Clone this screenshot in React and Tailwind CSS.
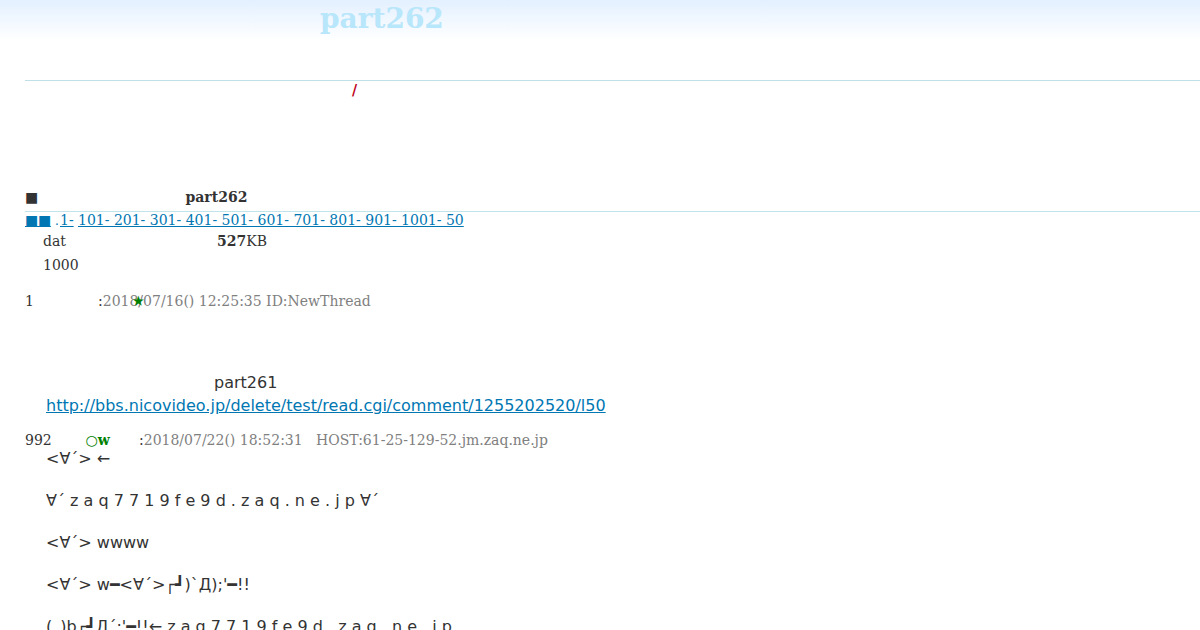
import clsx from 'clsx'

const PAGES = ['101-', '201-', '301-', '401-', '501-', '601-', '701-', '801-', '901-', '1001-', '50']

const LINES = [
  "<∀´> ←",
  "∀´ z a q 7 7 1 9 f e 9 d . z a q . n e . j p ∀´",
  "<∀´> wwww",
  "<∀´> w━<∀´>┌┛)`Д);'━!!",
  "(\u2002)b┌┛Д´;'━!!← z a q 7 7 1 9 f e 9 d . z a q . n e . j p",
]

function Link({ className, children }) {
  return (
    <a href="#" className={clsx('text-[#0077b3] underline', className)}>
      {children}
    </a>
  )
}

export default function App() {
  return (
    <div className="h-[630px] overflow-hidden whitespace-pre bg-white bg-linear-to-b from-[#e3f0ff] to-white to-[40px] pl-[25px] font-['DejaVu_Serif',serif] text-[14px] text-[#333]">
      {/* Title */}
      <header className="h-[81px] border-b border-[#c0e0e8] pl-[295px]">
        <h1 className="text-[28px] leading-[38px] font-bold text-[#b8e6fa]">part262</h1>
      </header>
      <p className="pl-[327px] leading-[18px] font-bold text-[#c00020]">/</p>

      {/* Thread heading */}
      <h2 className="mt-[86px] flex h-[27px] border-b border-[#c0e4ea] leading-[24px] font-bold">
        <span className="w-[160.5px]">■</span>
        <span>part262</span>
      </h2>
      <nav className="flex h-[16px] leading-[16px]">
        <Link className="w-[30px] tracking-[-0.3px]">■■</Link>
        <span className="w-[5px] text-[12px] leading-[18px] text-[#0077b3]">.</span>
        <Link className="w-[18px]">1-</Link>
        <Link>{PAGES.join(' ')}</Link>
      </nav>
      <div className="mt-px pl-[18px] leading-[24px]">
        <div className="flex">
          <span className="w-[174px]">dat</span>
          <b>527</b>
          <span>KB</span>
        </div>
        <p>1000</p>
      </div>

      {/* Posts */}
      <article className="mt-[12px]">
        <div className="relative flex leading-[24px]">
          <span className="w-[73px]">1</span>
          <span>:</span>
          <span className="text-[#808080]">2018/07/16() 12:25:35 ID:NewThread</span>
          <b className="absolute left-[108px] text-[12px] leading-[25px] text-[#008000]">★</b>
        </div>
        <div className="mt-[58px] pl-[21px] font-['DejaVu_Sans',sans-serif] text-[16px] leading-[23px]">
          <p className="pl-[168px]">part261</p>
          <Link>http://bbs.nicovideo.jp/delete/test/read.cgi/comment/1255202520/l50</Link>
        </div>
      </article>
      <article className="mt-[15px]">
        <div className="flex leading-[16px]">
          <span className="w-[60.5px]">992</span>
          <b className="w-[53.5px] text-[#008000]">○w</b>
          <span>:</span>
          <span className="text-[#808080]">2018/07/22() 18:52:31   HOST:61-25-129-52.jm.zaq.ne.jp</span>
        </div>
        <div className="flex flex-col gap-[21px] pl-[21px] font-['DejaVu_Sans',sans-serif] text-[16px] leading-[21px]">
          {LINES.map(line => <p key={line}>{line}</p>)}
        </div>
      </article>
    </div>
  )
}
